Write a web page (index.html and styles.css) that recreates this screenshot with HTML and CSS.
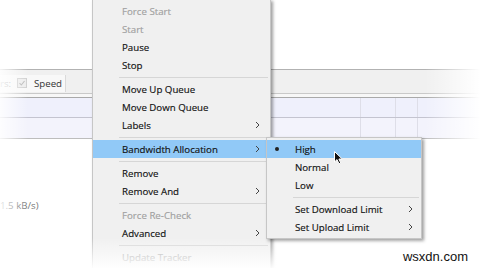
FILE: index.html
```html
<!DOCTYPE html>
<html lang="en">
<head>
    <meta charset="UTF-8">
    <meta name="viewport" content="width=device-width, initial-scale=1.0">
    <title>Torrent Context Menu</title>
    <link rel="stylesheet" href="styles.css">
</head>
<body>
    <div class="app">
        <div class="app-top"></div>
        <div class="toolbar">
            <div class="filter">
                <span class="filter-text">rs:</span>
                <span class="checkbox">
                    <svg width="8" height="8" viewBox="0 0 8 8"><path d="M1.5 4.2l1.8 1.8 3.2-4" fill="none" stroke="#b5b5b5" stroke-width="1.1"/></svg>
                </span>
                <span class="filter-label">Speed</span>
            </div>
        </div>
        <div class="toolbar-edge"></div>
        <div class="list">
            <div class="list-row">
                <span class="cell"></span><span class="cell"></span><span class="cell"></span><span class="cell"></span>
            </div>
            <div class="list-row alt">
                <span class="cell"></span><span class="cell"></span><span class="cell"></span><span class="cell"></span>
            </div>
        </div>
        <div class="status">
            <span class="rate">1.5 kB/s)</span>
        </div>
    </div>

    <!-- main context menu -->
    <div class="menu main-menu">
        <div class="item disabled"><span class="label">Force Start</span></div>
        <div class="item disabled"><span class="label">Start</span></div>
        <div class="item"><span class="label">Pause</span></div>
        <div class="item"><span class="label">Stop</span></div>
        <div class="sep"></div>
        <div class="item"><span class="label">Move Up Queue</span></div>
        <div class="item"><span class="label">Move Down Queue</span></div>
        <div class="item"><span class="label">Labels</span><svg class="arrow" width="5" height="8" viewBox="0 0 5 8"><path d="M1 1l3 3-3 3" fill="none" stroke="#444" stroke-width="1"/></svg></div>
        <div class="sep"></div>
        <div class="item active"><span class="label">Bandwidth Allocation</span><svg class="arrow" width="5" height="8" viewBox="0 0 5 8"><path d="M1 1l3 3-3 3" fill="none" stroke="#444" stroke-width="1"/></svg></div>
        <div class="sep"></div>
        <div class="item"><span class="label">Remove</span></div>
        <div class="item"><span class="label">Remove And</span><svg class="arrow" width="5" height="8" viewBox="0 0 5 8"><path d="M1 1l3 3-3 3" fill="none" stroke="#444" stroke-width="1"/></svg></div>
        <div class="sep"></div>
        <div class="item disabled"><span class="label">Force Re-Check</span></div>
        <div class="item"><span class="label">Advanced</span><svg class="arrow" width="5" height="8" viewBox="0 0 5 8"><path d="M1 1l3 3-3 3" fill="none" stroke="#444" stroke-width="1"/></svg></div>
        <div class="sep"></div>
        <div class="item disabled"><span class="label">Update Tracker</span></div>
    </div>

    <!-- bandwidth submenu -->
    <div class="menu sub-menu">
        <div class="item active"><span class="mark"><span class="dot"></span></span><span class="label">High</span></div>
        <div class="item"><span class="mark"></span><span class="label">Normal</span></div>
        <div class="item"><span class="mark"></span><span class="label">Low</span></div>
        <div class="sep"></div>
        <div class="item"><span class="mark"></span><span class="label">Set Download Limit</span><svg class="arrow" width="5" height="8" viewBox="0 0 5 8"><path d="M1 1l3 3-3 3" fill="none" stroke="#444" stroke-width="1"/></svg></div>
        <div class="item"><span class="mark"></span><span class="label">Set Upload Limit</span><svg class="arrow" width="5" height="8" viewBox="0 0 5 8"><path d="M1 1l3 3-3 3" fill="none" stroke="#444" stroke-width="1"/></svg></div>
    </div>

    <svg class="cursor" width="10" height="14" viewBox="0 0 10 14">
        <path d="M0.5 0.5V11L3 8.6 5 12.8 6.8 12 4.9 8H8.3Z" fill="#111" stroke="#fff" stroke-width="1" stroke-linejoin="round"/>
    </svg>

    <div class="fade"></div>
    <div class="watermark">wsxdn.com</div>
</body>
</html>
```

FILE: styles.css
```css
body {
    margin: 0;
    width: 480px;
    height: 268px;
    overflow: hidden;
    position: relative;
    background: #ffffff;
    font-family: "Open Sans", "Noto Sans", sans-serif;
    font-size: 9.7px;
    color: #111111;
}

/* background app window */
.app-top {
    height: 69px;
}

.toolbar {
    height: 23px;
    border-top: 1px solid #b2b2b2;
    background: #f0f0f0;
    display: flex;
    align-items: center;
}

.filter {
    display: flex;
    align-items: center;
    height: 17px;
    margin-top: 3px;
    padding-right: 3px;
    background: #f8f8f8;
    border-right: 1px solid #dadada;
}

.filter-text {
    width: 17px;
    color: #aaa;
}

.checkbox {
    width: 8px;
    height: 8px;
    margin-right: 7px;
    border: 1px solid #cfcfcf;
    background: #ececec;
    display: flex;
}

.filter-label {
    color: #333;
}

.toolbar-edge {
    height: 3px;
    border-top: 1px solid #c9c9c9;
    border-bottom: 1px solid #a9a9a9;
    background: #f7f7f7;
}

.list-row {
    height: 19px;
    display: grid;
    grid-template-columns: 360px 35px 22px 1fr;
    background: #eff0fc;
    border-bottom: 1px solid #c4c4d0;
}

.list-row.alt {
    height: 20px;
    background: #f3f3fc;
    border-bottom-color: #bdbdbd;
}

.list-row .cell + .cell {
    border-left: 1px solid #dedee8;
}

.status {
    padding-top: 60px;
}

.rate {
    color: #777;
}

/* context menus */
.menu {
    position: absolute;
    display: flex;
    flex-direction: column;
    padding: 2px 0;
    background: #f0f0f0;
    border: 1px solid #c6c6c6;
    box-shadow: 2px 2px 3px rgba(0, 0, 0, 0.38);
    -webkit-text-stroke: 0.15px currentColor;
}

.main-menu {
    left: 92px;
    top: -1px;
    width: 177px;
}

.sub-menu {
    left: 266px;
    top: 137px;
    width: 154px;
}

.item {
    height: 18px;
    display: flex;
    align-items: center;
    padding: 0 10px 0 29px;
}

.sub-menu .item {
    padding: 0 8px 0 8px;
}

.item .label {
    flex: 1;
    white-space: nowrap;
}

.item.disabled {
    color: #a0a0a0;
}

.item.active {
    background: #91c9f7;
}

.mark {
    width: 20px;
    display: flex;
    align-items: center;
}

.dot {
    width: 4px;
    height: 4px;
    border-radius: 50%;
    background: #222;
}

.sep {
    height: 1px;
    margin: 3px 2px 2px 26px;
    background: #d6d6d6;
}

.cursor {
    position: absolute;
    left: 334px;
    top: 151px;
}

/* soft vignette over the screenshot edges */
.fade {
    position: absolute;
    inset: 0;
    pointer-events: none;
    background:
        linear-gradient(to bottom, rgba(255, 255, 255, 0) 238px, rgba(255, 255, 255, 0.95) 268px),
        linear-gradient(to right, rgba(255, 255, 255, 0.85) 0, rgba(255, 255, 255, 0) 28px, rgba(255, 255, 255, 0) 425px, #ffffff 480px);
}

.watermark {
    position: absolute;
    right: 12px;
    bottom: 4px;
    font-family: "Liberation Sans", Arial, sans-serif;
    font-size: 13px;
    color: #111;
}
```
